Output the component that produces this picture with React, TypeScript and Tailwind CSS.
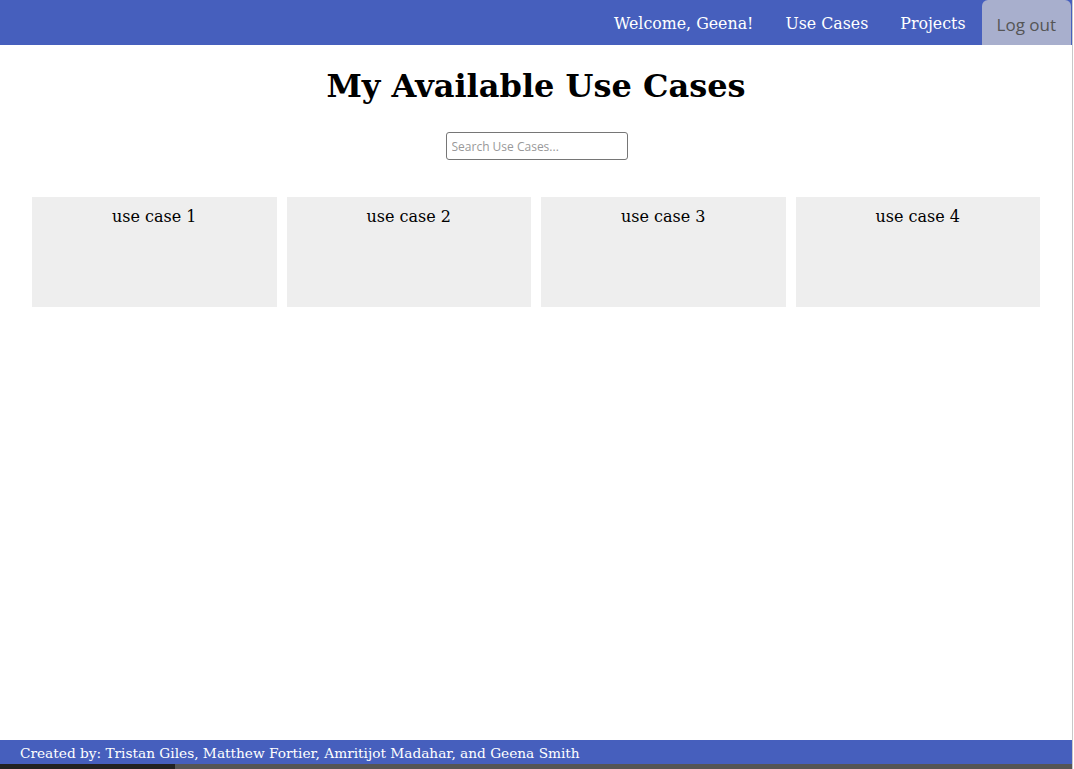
export default function App() {
  const serif = { fontFamily: '"DejaVu Serif", serif' };
  return (
    <div className="w-[1073px] h-[769px] border-r border-[#c8c8c8] bg-white flex flex-col relative overflow-hidden" style={serif}>
      <header className="h-[45px] bg-[#465fbd] flex justify-end items-stretch pr-[1px]">
        <nav className="flex items-stretch text-[15.8px] text-white">
          <span className="px-[16px] flex items-center pt-[3px]">Welcome, Geena!</span>
          <span className="px-[16px] flex items-center pt-[3px]">Use Cases</span>
          <span className="px-[16px] flex items-center pt-[3px]">Projects</span>
          <span className="px-[15px] flex items-center pt-[4px] bg-[#a8afcd] text-[#555] rounded-t-[6px] text-[17px]" style={{ fontFamily: '"Open Sans", sans-serif' }}>Log out</span>
        </nav>
      </header>
      <main className="flex-1 flex flex-col items-center">
        <h1 className="text-[32px] font-bold text-black mt-[20px] leading-[42px]">My Available Use Cases</h1>
        <input
          placeholder="Search Use Cases..."
          className="mt-[25px] ml-[1px] w-[182px] h-[28px] border border-[#767676] rounded-[3px] px-[5px] text-[12px] placeholder:text-[#999]"
          style={{ fontFamily: '"Open Sans", sans-serif' }}
        />
        <div className="mt-[37px] w-full px-[32px] grid grid-cols-4 gap-[10px]">
          {[1, 2, 3, 4].map((n) => (
            <div key={n} className="h-[110px] bg-[#eeeeee] text-center pt-[8px] text-[16px] text-black" style={{ fontFamily: '"DejaVu Serif", serif' }}>
              use case {n}
            </div>
          ))}
        </div>
      </main>
      <footer className="h-[24px] bg-[#465fbd] text-white text-[13.7px] pl-[20px] flex items-center pt-[2px] mb-[5px]">
        Created by: Tristan Giles, Matthew Fortier, Amritijot Madahar, and Geena Smith
      </footer>
      <div className="absolute left-0 bottom-0 h-[5px] w-full bg-[#555] flex">
        <div className="w-[175px] bg-[#222]" />
      </div>
    </div>
  );
}
